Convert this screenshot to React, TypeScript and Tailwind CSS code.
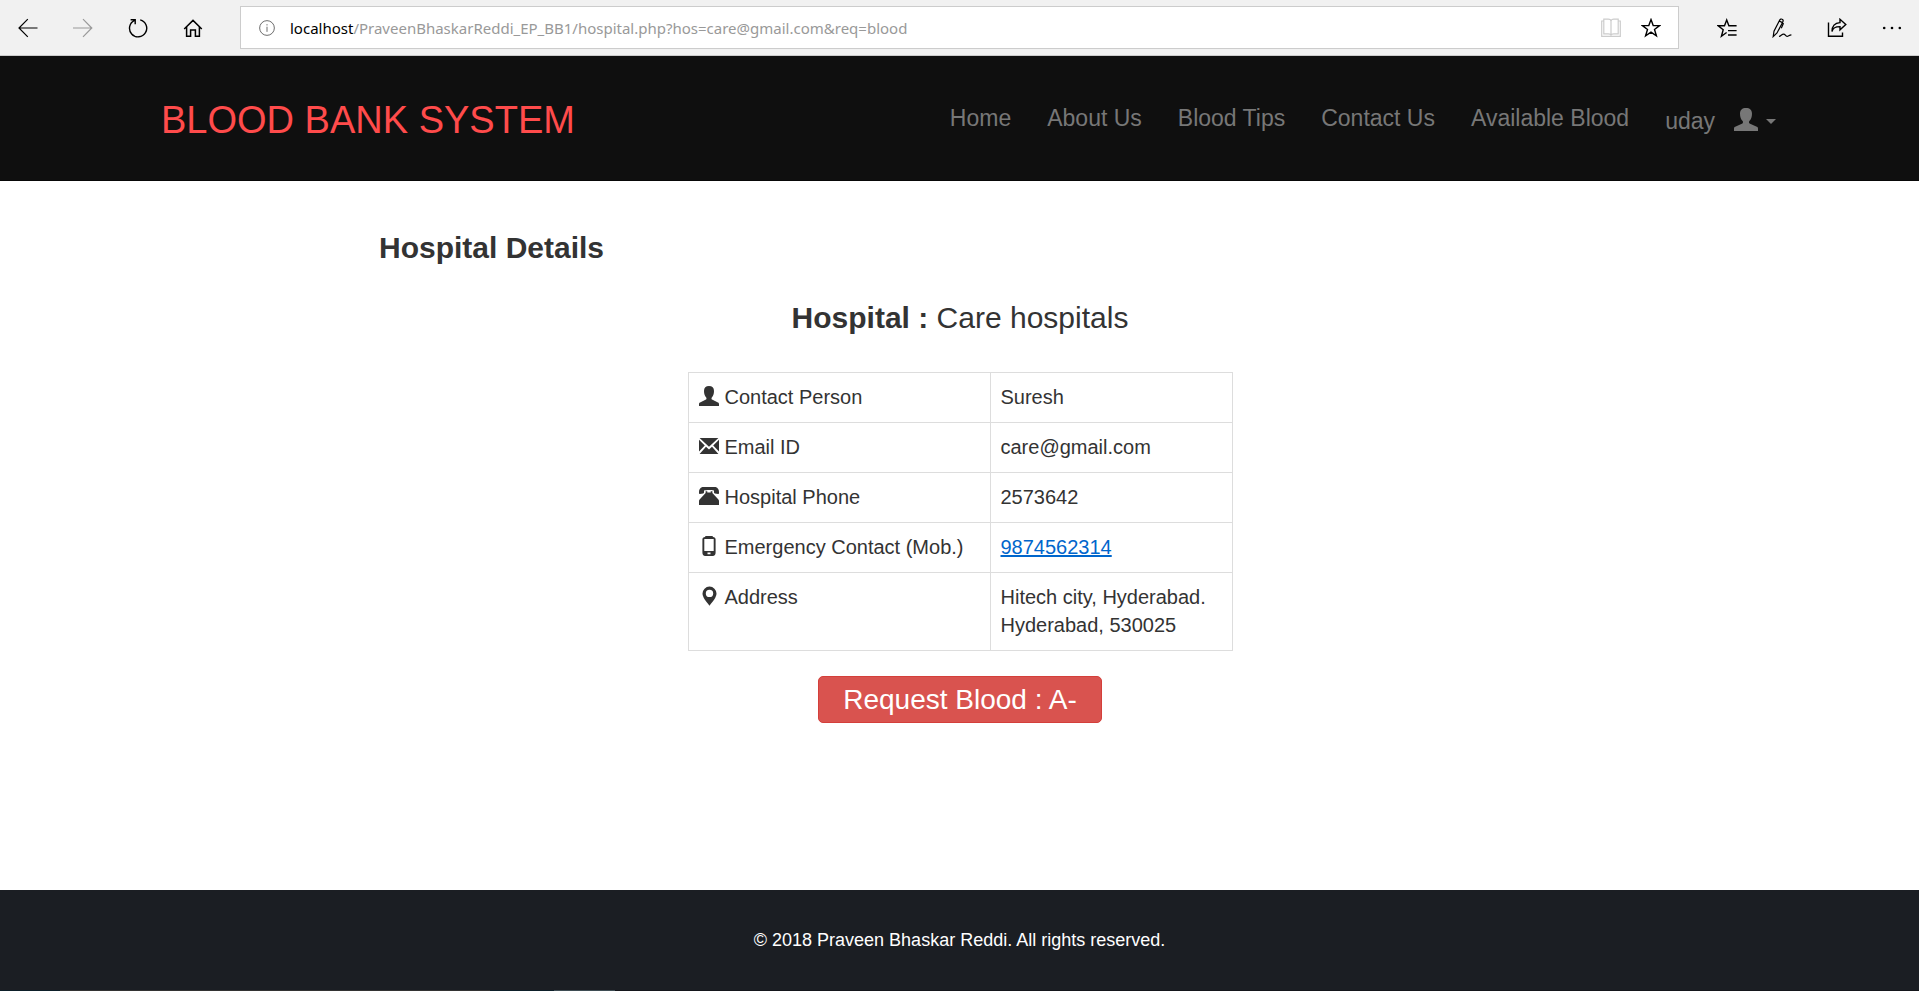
import type { ReactNode, SVGProps } from "react";

function Glyph({ children, ...rest }: SVGProps<SVGSVGElement> & { children: ReactNode }) {
  return (
    <svg viewBox="0 0 20 20" aria-hidden="true" {...rest}>
      {children}
    </svg>
  );
}

const line = { fill: "none", stroke: "currentColor", strokeWidth: 1.2 };

const BackIcon = () => (
  <Glyph className="size-5" {...line}>
    <path d="M19.5 10H1.5M9.800 1.200L1 10l8.800 8.800" />
  </Glyph>
);

const ForwardIcon = () => (
  <Glyph className="size-5" {...line}>
    <path d="M0 10h18.5M10 1.2l8.8 8.8-8.8 8.8" />
  </Glyph>
);

const RefreshIcon = () => (
  <Glyph className="size-5" {...line} strokeWidth={1.4}>
    <path d="M12.2 1.9a8.6 8.6 0 1 1-5.6.5M2.6 1.8h4.6v4.4" />
  </Glyph>
);

const HomeIcon = () => (
  <Glyph className="size-5" {...line} strokeWidth={1.5}>
    <path d="M1.2 11L10 2.4l8.8 8.6M3.6 9v9.2h4V12h4.8v6.2h4V9" />
  </Glyph>
);

const InfoIcon = () => (
  <Glyph className="size-4" {...line}>
    <circle cx="10" cy="10" r="9.2" />
    <path d="M10 8.4v6.4M10 5.2v1.6" />
  </Glyph>
);

const BookIcon = () => (
  <Glyph className="size-5" {...line}>
    <path d="M2.8 1.2h4.4c1.6 0 2.8.8 2.8 2 0-1.2 1.2-2 2.8-2h4.4v14.6h-4.4c-1.6 0-2.8.6-2.8 1.8 0-1.2-1.2-1.8-2.8-1.8H2.8zM10 3.2v14M2.8 3H.7v15.4h18.6V3h-2.1" />
  </Glyph>
);

const StarIcon = () => (
  <Glyph className="size-5" {...line} strokeWidth={1.4}>
    <path d="M10 1.600l2.200 6h6.400l-5.100 3.900 1.900 6.300L10 14.100l-5.400 3.700 1.900-6.300-5.100-3.900h6.400z" />
  </Glyph>
);

const FavoritesIcon = () => (
  <Glyph className="size-5" {...line} strokeWidth={1.4}>
    <path d="M19.600 7.800H11.900L9.700 2 7.500 7.800H1.200l5 3.900-1.800 6.500 5.200-3.700M11 12.600h8.600M11 17h8.600" />
  </Glyph>
);

const NotesIcon = () => (
  <Glyph className="size-5" {...line} strokeWidth={1.2}>
    <path d="M1.200 18.600l.8-5.400L7.600 2.300c.6-1.200 1.700-1.600 2.600-1.100 1 .5 1.200 1.500.6 2.700L5 15zM7.300 3l3.100 1.600M10.300 5l1 .8-2 4.400M7 18.500c1.800-.3 2.800-2.400 4.600-2.400s1.700 2.200 3.500 2.200c1.400 0 2-1.300 4.300-1.500" />
  </Glyph>
);

const ShareIcon = () => (
  <Glyph className="size-5" {...line} strokeWidth={1.4}>
    <path d="M1.500 4.500v13.700h14v-3.600M5 13.600c.6-3.800 3.200-5 8-5v3.200l5.800-5.300L13 1.300v3.300c-5.400.3-8 3.400-8 9z" />
  </Glyph>
);

const MoreIcon = () => (
  <Glyph className="size-5" fill="currentColor">
    <circle cx="2.2" cy="10" r="1.3" />
    <circle cx="10" cy="10" r="1.3" />
    <circle cx="17.8" cy="10" r="1.3" />
  </Glyph>
);

const UserIcon = ({ className }: { className: string }) => (
  <Glyph className={className} fill="currentColor" preserveAspectRatio="none">
    <path d="M10 0c3.200 0 5 1.700 5 5 0 2.900-.8 4.900-2.200 6.400-.4.500-.4 1.700.2 2.100l6 2.900c.8.400 1 .8 1 1.800V20H0v-1.800c0-1 .2-1.400 1-1.800l6-2.900c.6-.4.6-1.600.2-2.100C5.800 9.900 5 7.900 5 5c0-3.300 1.800-5 5-5z" />
  </Glyph>
);

const MailIcon = () => (
  <Glyph className="size-5" fill="currentColor">
    <path d="M.6 2h18.800L10 10.800zM0 3.800l5.800 5.700L0 15.600zM20 3.800v11.800l-5.800-6.100zM7 10.700l3 2.700 3-2.700 6.400 7.300H.6z" />
  </Glyph>
);

const PhoneIcon = () => (
  <Glyph className="size-5" fill="currentColor">
    <path d="M3.4 1h13.200C19 1.900 20 3.600 20 6v1.200c0 .4-.3.800-.8.800l-3.400-.6c-.5-.1-.8-.4-.8-.9V4.600c-2.600-.7-7.400-.7-10 0v1.900c0 .5-.3.800-.8.900L.8 8C.3 8 0 7.600 0 7.200V6c0-2.400 1-4.100 3.400-5zM6.600 5.200h1.700v1.200h3.400V5.200h1.700v1.800l6 6.400c.4.500.6.900.6 1.500V19H0v-4.100c0-.6.2-1 .6-1.500l6-6.400z" />
  </Glyph>
);

const MobileIcon = () => (
  <Glyph className="size-5" fill="currentColor">
    <path
      fillRule="evenodd"
      d="M6.500 0h7l.5 1c1.600 0 2.600 1 2.600 2.400v13.200c0 2-1 3.400-2.800 3.400H6.200c-1.800 0-2.800-1.400-2.800-3.400V3.400C3.400 2 4.400 1 6 1zM5.300 3v12h9.400V3zM8.500 16.400v1.800h3v-1.800z"
    />
  </Glyph>
);

const PinIcon = () => (
  <Glyph className="size-5" fill="currentColor">
    <path
      fillRule="evenodd"
      d="M10.500.6a7 7 0 0 1 7 7c0 3.600-3.700 8.200-7 12.100-3.300-3.900-7-8.500-7-12.100a7 7 0 0 1 7-7zm0 3.100a3.700 3.700 0 1 0 0 7.400 3.700 3.700 0 0 0 0-7.400z"
    />
  </Glyph>
);

function ToolButton({ label, children, disabled }: { label: string; children: ReactNode; disabled?: boolean }) {
  return (
    <button type="button" aria-label={label} disabled={disabled} className="text-black disabled:text-[#999]">
      {children}
    </button>
  );
}

function BrowserBar() {
  return (
    <div className="flex h-14 items-center border-b border-[#cccccc] bg-[#f1f1f1] pr-[17px] pl-[18px]">
      <div className="flex items-center gap-[35px]">
        <ToolButton label="Back"><BackIcon /></ToolButton>
        <ToolButton label="Forward" disabled><ForwardIcon /></ToolButton>
        <ToolButton label="Refresh"><RefreshIcon /></ToolButton>
        <ToolButton label="Home"><HomeIcon /></ToolButton>
      </div>
      <div className="ml-[37px] flex h-[43px] min-w-0 flex-1 items-center border border-[#cccccc] bg-white pr-[17px] pl-[18px]">
        <button type="button" aria-label="Site information" className="text-[#666]"><InfoIcon /></button>
        <div
          role="textbox"
          aria-label="Address"
          contentEditable
          suppressContentEditableWarning
          spellCheck={false}
          className="ml-[15px] min-w-0 flex-1 overflow-hidden font-['Noto_Sans','Open_Sans',sans-serif] text-[15px] leading-6 whitespace-nowrap text-[#999] outline-none"
        >
          <span className="text-black">localhost</span>/PraveenBhaskarReddi_EP_BB1/hospital.php?hos=care@gmail.com&amp;req=blood
        </div>
        <div className="flex items-center gap-5">
          <button type="button" aria-label="Reading view" disabled className="text-[#ccc]"><BookIcon /></button>
          <ToolButton label="Add to favourites"><StarIcon /></ToolButton>
        </div>
      </div>
      <div className="ml-[38px] flex items-center gap-[35px]">
        <ToolButton label="Favourites hub"><FavoritesIcon /></ToolButton>
        <ToolButton label="Add notes"><NotesIcon /></ToolButton>
        <ToolButton label="Share"><ShareIcon /></ToolButton>
        <ToolButton label="Settings and more"><MoreIcon /></ToolButton>
      </div>
    </div>
  );
}

const links = ["Home", "About Us", "Blood Tips", "Contact Us", "Available Blood"];

function Navbar() {
  return (
    <header className="flex h-[125px] items-center justify-between border-b border-[#080808] bg-[#0f0f0f] pt-[3px] pr-[143px] pl-[161px]">
      <a href="#home" className="text-[38px] leading-[44px] text-[#ff4b4b]">BLOOD BANK SYSTEM</a>
      <nav className="flex items-start gap-9 text-[23px] leading-7 text-[#777777]">
        {links.map((l) => (
          <a key={l} href={"#" + l.toLowerCase().replace(" ", "-")}>{l}</a>
        ))}
        <button type="button" aria-haspopup="menu" className="flex items-center pt-[3px]">
          uday
          <UserIcon className="mb-1 ml-[19px] h-[23px] w-6" />
          <span className="ml-2 border-x-5 border-t-5 border-x-transparent border-t-current" />
        </button>
      </nav>
    </header>
  );
}

const rows: { icon: ReactNode; label: string; value: ReactNode }[] = [
  { icon: <UserIcon className="size-5" />, label: "Contact Person", value: "Suresh" },
  { icon: <MailIcon />, label: "Email ID", value: "care@gmail.com" },
  { icon: <PhoneIcon />, label: "Hospital Phone", value: "2573642" },
  {
    icon: <MobileIcon />,
    label: "Emergency Contact (Mob.)",
    value: <a href="tel:9874562314" className="text-[#0066cc] underline">9874562314</a>,
  },
  { icon: <PinIcon />, label: "Address", value: <>Hitech city, Hyderabad.<br />Hyderabad, 530025</> },
];

export default function App() {
  return (
    <div className="flex min-h-screen flex-col bg-white font-['Liberation_Sans',Arial,sans-serif] text-[#333333]">
      <BrowserBar />
      <Navbar />
      <main className="flex flex-1 flex-col items-center pl-px">
        <h2 className="mt-[50px] w-full pl-[378px] text-[30px] leading-[34px] font-bold">Hospital Details</h2>
        <h3 className="mt-9 text-[30px] leading-[34px]"><b>Hospital :</b> Care hospitals</h3>
        <table className="mt-[37px] border-collapse text-xl leading-7">
          <tbody>
            {rows.map((r) => (
              <tr key={r.label} className="align-top">
                <th scope="row" className="w-[302px] border border-[#dddddd] px-[10px] pt-[10px] pb-[11px] text-left font-normal">
                  <span className="flex gap-[6px]"><span className="pt-[3px]">{r.icon}</span>{r.label}</span>
                </th>
                <td className="w-[242px] border border-[#dddddd] px-[10px] pt-[10px] pb-[11px]">{r.value}</td>
              </tr>
            ))}
          </tbody>
        </table>
        <button type="button" className="mt-[25px] h-[47px] rounded-[5px] border border-[#d43f3a] bg-[#d9534f] px-6 text-[28px] leading-9 text-white">
          Request Blood : A-
        </button>
      </main>
      <footer className="flex h-[101px] flex-col bg-[#1b1e23]">
        <p className="flex flex-1 items-center justify-center text-[18px] text-white">© 2018 Praveen Bhaskar Reddi. All rights reserved.</p>
        <div className="flex h-px bg-[#0d1f29]">
          <span className="ml-[60px] w-[430px] bg-[#333333]" />
          <span className="ml-16 w-[61px] bg-[#3f4d54]" />
          <span className="flex-1 bg-[#14161b]" />
        </div>
      </footer>
    </div>
  );
}
